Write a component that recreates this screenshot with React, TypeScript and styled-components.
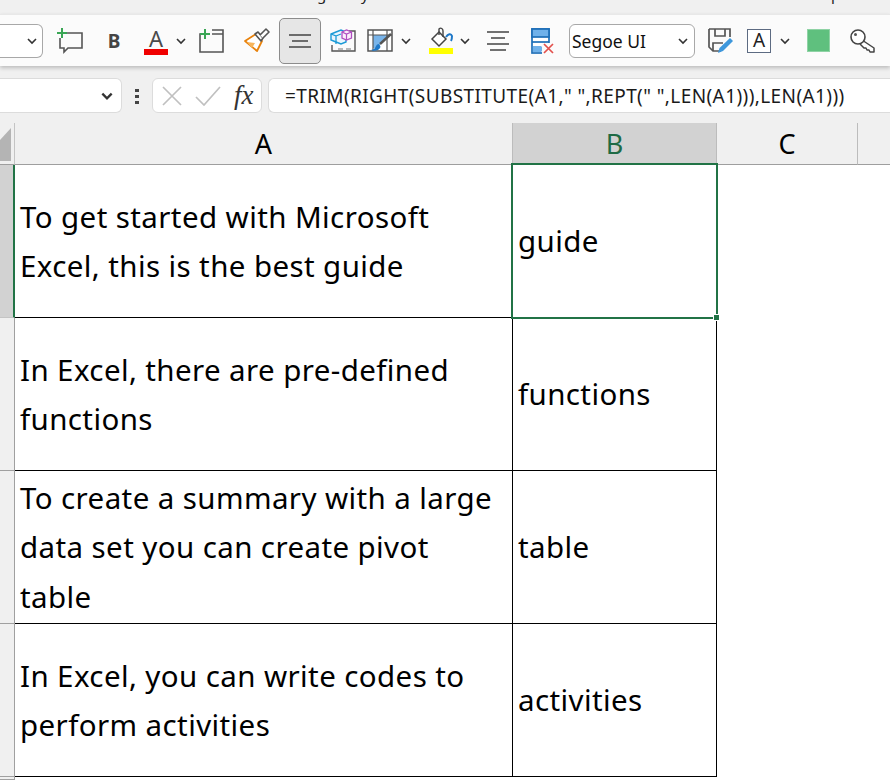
import React from "react";
import styled, { createGlobalStyle } from "styled-components";

const GlobalStyle = createGlobalStyle`
  html, body { margin: 0; padding: 0; height: 100%; overflow: hidden; background: #fff; }
  #root { height: 100%; }
`;

const Page = styled.div`
  width: 890px;
  height: 780px;
  overflow: hidden;
  display: flex;
  flex-direction: column;
  background: #f0f0f0;
  font-family: "Noto Sans", "Open Sans", sans-serif;
`;

const TitleStrip = styled.div`
  height: 14px;
  overflow: hidden;
  position: relative;
`;
const TitleText = styled.span`
  position: absolute;
  left: ${(p: { $x: number }) => p.$x}px;
  top: -16px;
  font-size: 15px;
  line-height: 20px;
  color: #222;
`;

const Ribbon = styled.div`
  height: 52px;
  background: #fbfbfb;
  border-top: 1px solid #e8e8e8;
  box-sizing: border-box;
  box-shadow: 0 2px 4px rgba(0, 0, 0, 0.22);
  display: flex;
  align-items: center;
  position: relative;
`;
const LeftCombo = styled.div`
  width: 43px;
  height: 34px;
  box-sizing: border-box;
  background: #fff;
  border: 1px solid #a8a8a8;
  border-left: none;
  border-radius: 0 6px 6px 0;
  display: flex;
  align-items: center;
  justify-content: flex-end;
  padding-right: 4px;
`;
const Tool = styled.div<{ $w: number; $gap?: number }>`
  width: ${(p) => p.$w}px;
  margin-left: ${(p) => p.$gap ?? 0}px;
  height: 36px;
  flex: none;
  display: flex;
  align-items: center;
  justify-content: center;
`;
const BoldTool = styled(Tool)`
  font-size: 19px;
  font-weight: 700;
  color: #444;
`;
const ActiveTool = styled(Tool)`
  height: 46px;
  box-sizing: border-box;
  background: #e6e6e6;
  border: 1px solid #8c8c8c;
  border-radius: 5px;
`;
const ColorLetter = styled.div`
  width: 24px;
  margin-top: 3px;
  display: flex;
  flex-direction: column;
  align-items: center;
  font-size: 22px;
  line-height: 19px;
  color: #4a4a4a;
`;
const ColorBar = styled.div`
  width: 24px;
  height: 6px;
  margin-top: 1px;
  background: #f00000;
`;
const BoxedLetter = styled.div`
  width: 24px;
  height: 24px;
  box-sizing: border-box;
  background: #fff;
  border: 1px solid #5d6b82;
  display: flex;
  align-items: center;
  justify-content: center;
  font-size: 19px;
  line-height: 1;
  color: #222;
`;
const FontSelect = styled.div`
  width: 126px;
  height: 34px;
  margin-left: 13px;
  flex: none;
  box-sizing: border-box;
  background: #fff;
  border: 1px solid #a8a8a8;
  border-radius: 6px;
  display: flex;
  align-items: center;
  justify-content: space-between;
  padding: 0 5px 0 2px;
  font-size: 17.5px;
  color: #111;
`;

const FormulaRow = styled.div`
  margin-top: 12px;
  height: 35px;
  display: flex;
  align-items: stretch;
`;
const NameBox = styled.div`
  width: 122px;
  box-sizing: border-box;
  background: #fff;
  border: 1px solid #dcdcdc;
  border-left: none;
  border-radius: 0 6px 6px 0;
  display: flex;
  align-items: center;
  justify-content: flex-end;
  padding-right: 7px;
`;
const Grip = styled.div`
  width: 30px;
  display: flex;
  align-items: center;
  justify-content: center;
`;
const FormulaButtons = styled.div`
  width: 110px;
  box-sizing: border-box;
  background: #fff;
  border: 1px solid #dcdcdc;
  border-radius: 6px;
  display: flex;
  align-items: center;
  padding-left: 8px;
  gap: 12px;
`;
const FxLabel = styled.span`
  font-family: "Liberation Serif", serif;
  font-style: italic;
  font-size: 27px;
  line-height: 1;
  color: #333;
  margin-left: 1px;
`;
const FormulaInput = styled.div`
  flex: 1;
  margin-left: 6px;
  box-sizing: border-box;
  background: #fff;
  border: 1px solid #dcdcdc;
  border-right: none;
  border-radius: 6px 0 0 6px;
  padding-left: 16px;
  display: flex;
  align-items: center;
  font-size: 19px;
  letter-spacing: 0.4px;
  color: #1a1a1a;
  white-space: nowrap;
`;

const Sheet = styled.div`
  margin-top: 10px;
  flex: 1;
  display: grid;
  grid-template-columns: 15px 498px 204px 141px 1fr;
  grid-template-rows: 42px repeat(4, 153px) 1fr;
  background: #fff;
`;
const Corner = styled.div`
  background: #f0f0f0;
  border-right: 1px solid #c4c4c4;
  border-bottom: 1px solid #9e9e9e;
  box-sizing: border-box;
  position: relative;
  overflow: hidden;
`;
const CornerMark = styled.div`
  position: absolute;
  right: 3px;
  bottom: 3px;
  width: 11px;
  height: 33px;
  background: #b4b4b4;
  clip-path: polygon(100% 0, 100% 100%, 0 100%, 0 12px);
`;
const ColHead = styled.div<{ $on?: boolean }>`
  box-sizing: border-box;
  background: ${(p) => (p.$on ? "#d2d2d2" : "#f0f0f0")};
  border-right: 1px solid #bcbcbc;
  border-bottom: 1px solid #9e9e9e;
  color: ${(p) => (p.$on ? "#1f6b45" : "#000")};
  display: flex;
  align-items: center;
  justify-content: center;
  font-size: 27px;
`;
const OpenHead = styled(ColHead)`
  border-right: none;
`;
const RowHead = styled.div<{ $on?: boolean }>`
  box-sizing: border-box;
  background: ${(p) => (p.$on ? "#d2d2d2" : "#f0f0f0")};
  border-right: ${(p) => (p.$on ? "2px solid #217346" : "1px solid #a0a0a0")};
  border-bottom: 1px solid ${(p) => (p.$on ? "#c4c4c4" : "#a0a0a0")};
`;
const Cell = styled.div<{ $selected?: boolean }>`
  box-sizing: border-box;
  background: #fff;
  border-right: 1px solid #000;
  border-bottom: 1px solid #000;
  padding: 0 12px 0 5px;
  display: flex;
  align-items: center;
  font-size: 29.5px;
  letter-spacing: 0.4px;
  line-height: 49.5px;
  color: #000;
  position: relative;
  z-index: ${(p) => (p.$selected ? 1 : "auto")};
`;
const Blank = styled.div`
  background: #fff;
`;
const Selection = styled.div`
  position: absolute;
  left: -2px;
  top: -2px;
  right: -2px;
  bottom: -2px;
  border: 2px solid #217346;
  pointer-events: none;
`;
const FillHandle = styled.div`
  position: absolute;
  right: -4px;
  bottom: -4px;
  width: 5px;
  height: 5px;
  background: #217346;
  border: 1px solid #fff;
`;

const Chevron = ({ size = 12, weight = 1.6 }: { size?: number; weight?: number }) => (
  <svg width={size} height={size} viewBox="0 0 12 12">
    <path d="M2 4l4 4 4-4" fill="none" stroke="#333" strokeWidth={weight} />
  </svg>
);

const NewComment = () => (
  <svg width="28" height="26" viewBox="0 0 28 26">
    <path d="M9 5h17v15H12l-4 4v-4H4V10" fill="none" stroke="#555" strokeWidth="1.6" />
    <path d="M6 0v10M1 5h10" stroke="#3aa655" strokeWidth="2" />
  </svg>
);
const NewSheet = () => (
  <svg width="26" height="24" viewBox="0 0 26 24">
    <path d="M9 5H1v18h23V1H13M13 5h11" fill="none" stroke="#555" strokeWidth="1.6" />
    <path d="M6 0v10M1 5h10" stroke="#3aa655" strokeWidth="2" />
  </svg>
);
const Brush = () => (
  <svg width="26" height="26" viewBox="0 0 26 26">
    <path d="M1 13l11-7 6 7-5 10z" fill="#fff" stroke="#e8820c" strokeWidth="1.8" strokeLinejoin="round" />
    <path d="M3 14l8 1-3 5z" fill="#f7b55c" />
    <path d="M11 6l3-2 5 6-2 3z" fill="#fff" stroke="#555" strokeWidth="1.6" strokeLinejoin="round" />
    <path d="M16 7l6-6 3 3-6 6" fill="#fff" stroke="#555" strokeWidth="1.6" strokeLinejoin="round" />
  </svg>
);
const AlignMiddle = () => (
  <svg width="22" height="18" viewBox="0 0 22 18">
    <path d="M0 3h22M3 9h16M0 15h22" stroke="#444" strokeWidth="1.7" />
  </svg>
);
const Cubes = () => (
  <svg width="26" height="24" viewBox="0 0 26 24">
    <path d="M19 2h6v20H2v-6" fill="none" stroke="#555" strokeWidth="1.4" />
    <path d="M8 20h5M16 20h5" stroke="#777" strokeWidth="1.2" />
    <path d="M6 3l5-2 5 2v10l-5 2-5-2-5-2V5z" fill="#eaf6fd" stroke="#1b9ad6" strokeWidth="1.4" />
    <path d="M1 5l5 2v8M6 7l5-2" fill="none" stroke="#1b9ad6" strokeWidth="1.3" />
    <path d="M12 3l4.5-2 5 2v6l-5 2-4.500-2z" fill="#fbeefb" stroke="#b04fc0" strokeWidth="1.3" />
    <path d="M12 3l4.5 2 5-2M16.5 5v6" fill="none" stroke="#b04fc0" strokeWidth="1.2" />
  </svg>
);
const ChartBrush = () => (
  <svg width="26" height="24" viewBox="0 0 26 24">
    <rect x="1" y="1" width="24" height="21" fill="#fff" stroke="#555" strokeWidth="1.5" />
    <path d="M6 6h15v2L9 19H6z" fill="#78b4ea" />
    <path d="M1 6h24M6 1v21M20 1v21" stroke="#555" strokeWidth="1.2" />
    <path d="M24 5L13 15" stroke="#555" strokeWidth="2.4" />
    <path d="M12 15c-3 0-3 3-4 4-1 1-3 2-4 2 4 2 8 0 9-2 1-1 0-3-1-4z" fill="#1e78c8" />
  </svg>
);
const FillColor = () => (
  <svg width="26" height="27" viewBox="0 0 26 27">
    <path d="M4 12l7-7 7 7-7 7z" fill="#fff" stroke="#444" strokeWidth="1.5" />
    <path d="M11 8V2c2-2 4 0 4 2v6" fill="none" stroke="#444" strokeWidth="1.4" />
    <path d="M18 10c2-3 5-4 6-1 0 2 0 3-1 5" fill="none" stroke="#1e78c8" strokeWidth="2" />
    <rect x="1" y="21" width="24" height="6" fill="#ffff00" />
  </svg>
);
const AlignLines = () => (
  <svg width="22" height="22" viewBox="0 0 22 22">
    <path d="M0 2h22M4 8h14M0 14h22M3 20h16" stroke="#444" strokeWidth="1.7" />
  </svg>
);
const ClearFormat = () => (
  <svg width="24" height="26" viewBox="0 0 24 26">
    <rect x="1" y="1" width="17" height="24" fill="#fff" stroke="#1e6fb8" strokeWidth="1.7" />
    <rect x="1" y="1" width="17" height="8" fill="#6fb1ea" stroke="#1e6fb8" strokeWidth="1.7" />
    <path d="M1 14h17" stroke="#1e6fb8" strokeWidth="1.7" />
    <path d="M2 18h8l3 3-3 3H2z" fill="#6fb1ea" />
    <rect x="11" y="15" width="13" height="11" fill="#fbfbfb" />
    <path d="M13 16l9 9M22 16l-9 9" stroke="#e2504c" strokeWidth="1.7" />
  </svg>
);
const SavePen = () => (
  <svg width="26" height="26" viewBox="0 0 26 26">
    <path d="M1 1h21v8M1 1v18l4 4h8" fill="none" stroke="#555" strokeWidth="1.7" />
    <path d="M7 1v7h10V1M5 23v-8h10" fill="none" stroke="#555" strokeWidth="1.7" />
    <path d="M10 25l1.500-5L22 10l3 3-10 10z" fill="#3d97dc" />
  </svg>
);
const GreenSwatch = () => (
  <svg width="23" height="23" viewBox="0 0 23 23">
    <rect x="0.5" y="0.5" width="22" height="22" fill="#5fc07e" stroke="#8fd3a5" />
  </svg>
);
const KeyIcon = () => (
  <svg width="25" height="24" viewBox="0 0 25 24">
    <path d="M12 11l12 8v4h-4l-1-2h-2l-1-2h-2l-4-4" fill="#fff" stroke="#444" strokeWidth="1.5" strokeLinejoin="round" />
    <circle cx="8" cy="8" r="7" fill="#fff" stroke="#444" strokeWidth="1.6" />
    <circle cx="5.500" cy="5.500" r="1.500" fill="#555" />
  </svg>
);
const GripDots = () => (
  <svg width="6" height="16" viewBox="0 0 6 16">
    <path d="M1 1h4v3H1zM1 7h4v3H1zM1 13h4v3H1z" fill="#444" />
  </svg>
);
const CrossMark = () => (
  <svg width="22" height="22" viewBox="0 0 22 22">
    <path d="M2 2l18 18M20 2L2 20" stroke="#c0c0c0" strokeWidth="1.7" />
  </svg>
);
const CheckMark = () => (
  <svg width="26" height="20" viewBox="0 0 26 20">
    <path d="M1 11l8 8L25 1" fill="none" stroke="#c0c0c0" strokeWidth="1.7" />
  </svg>
);

const rows = [
  { text: "To get started with Microsoft Excel, this is the best guide", result: "guide" },
  { text: "In Excel, there are pre-defined functions", result: "functions" },
  { text: "To create a summary with a large data set you can create pivot table", result: "table" },
  { text: "In Excel, you can write codes to perform activities", result: "activities" },
];

export default function App() {
  return (
    <>
      <GlobalStyle />
      <Page>
        <TitleStrip>
          <TitleText $x={317}>g</TitleText>
          <TitleText $x={361}>y</TitleText>
          <TitleText $x={831}>p</TitleText>
        </TitleStrip>
        <Ribbon>
          <LeftCombo>
            <Chevron />
          </LeftCombo>
          <Tool $w={30} $gap={12}><NewComment /></Tool>
          <BoldTool $w={30} $gap={14}>B</BoldTool>
          <Tool $w={30} $gap={12}>
            <ColorLetter>
              A
              <ColorBar />
            </ColorLetter>
          </Tool>
          <Tool $w={12} $gap={4}><Chevron /></Tool>
          <Tool $w={28} $gap={11}><NewSheet /></Tool>
          <Tool $w={28} $gap={17}><Brush /></Tool>
          <ActiveTool $w={42} $gap={8}><AlignMiddle /></ActiveTool>
          <Tool $w={28} $gap={8}><Cubes /></Tool>
          <Tool $w={28} $gap={9}><ChartBrush /></Tool>
          <Tool $w={12} $gap={6}><Chevron /></Tool>
          <Tool $w={28} $gap={15}><FillColor /></Tool>
          <Tool $w={12} $gap={4}><Chevron /></Tool>
          <Tool $w={26} $gap={14}><AlignLines /></Tool>
          <Tool $w={26} $gap={19}><ClearFormat /></Tool>
          <FontSelect>
            Segoe UI
            <Chevron />
          </FontSelect>
          <Tool $w={28} $gap={12}><SavePen /></Tool>
          <Tool $w={24} $gap={12}><BoxedLetter>A</BoxedLetter></Tool>
          <Tool $w={12} $gap={8}><Chevron /></Tool>
          <Tool $w={23} $gap={16}><GreenSwatch /></Tool>
          <Tool $w={25} $gap={20}><KeyIcon /></Tool>
        </Ribbon>
        <FormulaRow>
          <NameBox>
            <Chevron size={14} weight={2} />
          </NameBox>
          <Grip>
            <GripDots />
          </Grip>
          <FormulaButtons>
            <CrossMark />
            <CheckMark />
            <FxLabel>fx</FxLabel>
          </FormulaButtons>
          <FormulaInput>{'=TRIM(RIGHT(SUBSTITUTE(A1," ",REPT(" ",LEN(A1))),LEN(A1)))'}</FormulaInput>
        </FormulaRow>
        <Sheet>
          <Corner>
            <CornerMark />
          </Corner>
          <ColHead>A</ColHead>
          <ColHead $on>B</ColHead>
          <ColHead>C</ColHead>
          <OpenHead />
          {rows.map((row, index) => (
            <React.Fragment key={index}>
              <RowHead $on={index === 0} />
              <Cell>{row.text}</Cell>
              <Cell $selected={index === 0}>
                {row.result}
                {index === 0 && (
                  <Selection>
                    <FillHandle />
                  </Selection>
                )}
              </Cell>
              <Blank />
              <Blank />
            </React.Fragment>
          ))}
          <RowHead />
          <Blank />
          <Blank />
          <Blank />
          <Blank />
        </Sheet>
      </Page>
    </>
  );
}
